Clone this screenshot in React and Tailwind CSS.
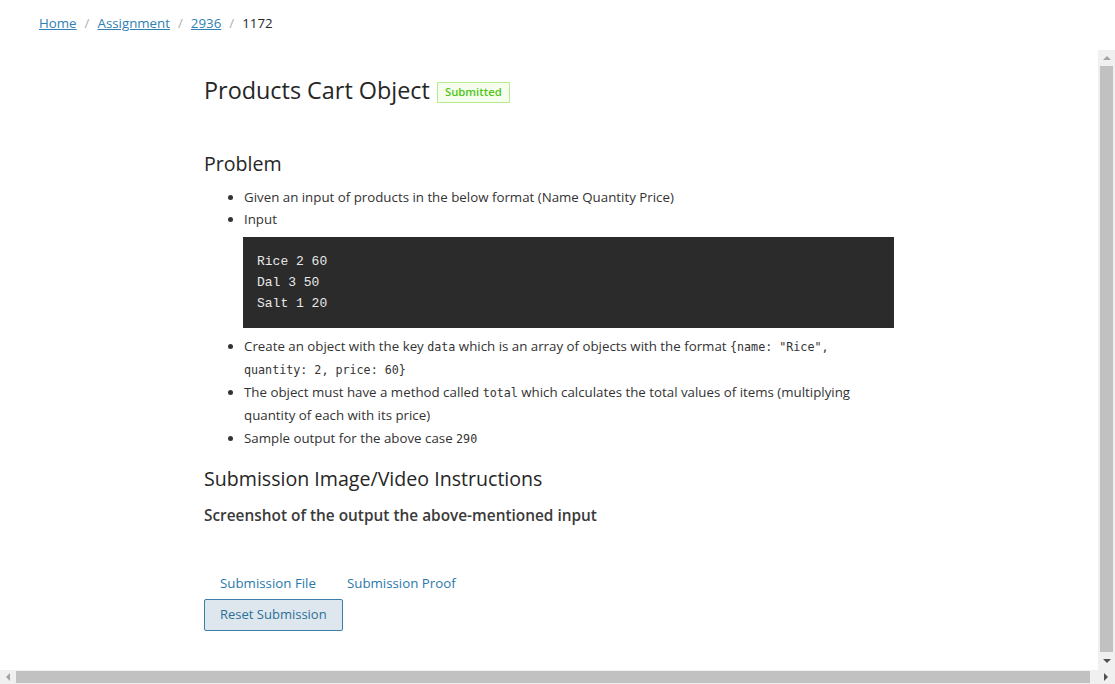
import React from 'react';

const font = { fontFamily: '"Open Sans", "Noto Sans", sans-serif' };

const Code = ({ children }) => (
  <code className="font-['DejaVu_Sans_Mono',monospace] text-[11.7px] leading-none text-[#333]">{children}</code>
);

const VScrollbar = () => (
  <div className="w-[17px] bg-[#f0f0f0] flex flex-col items-center">
    <div className="h-[16px] w-full flex items-center justify-center">
      <div className="w-0 h-0 border-l-[4px] border-r-[4px] border-b-[4px] border-l-transparent border-r-transparent border-b-[#a3a3a3]" />
    </div>
    <div className="flex-1 w-[13px] bg-[#c1c1c1]" />
    <div className="h-[18px] w-full flex items-center justify-center">
      <div className="w-0 h-0 border-l-[4px] border-r-[4px] border-t-[4px] border-l-transparent border-r-transparent border-t-[#505050]" />
    </div>
  </div>
);

const HScrollbar = () => (
  <div className="h-[14px] bg-[#f0f0f0] flex items-center">
    <div className="w-[16px] flex justify-center">
      <div className="w-0 h-0 border-t-[4px] border-b-[4px] border-r-[4px] border-t-transparent border-b-transparent border-r-[#a3a3a3]" />
    </div>
    <div className="h-[12px] w-[1074px] bg-[#c1c1c1]" />
    <div className="flex-1 flex justify-end pr-[7px]">
      <div className="w-0 h-0 border-t-[4px] border-b-[4px] border-l-[4px] border-t-transparent border-b-transparent border-l-[#505050]" />
    </div>
  </div>
);

export default function App() {
  return (
    <div className="w-[1115px] h-[684px] flex flex-col bg-white overflow-hidden text-[#333]" style={font}>
      {/* breadcrumb */}
      <div className="h-[50px] pl-[39px] pt-[13px] text-[13.3px] leading-[20px] flex items-start">
        <a href="#" className="underline text-[#2f7fb2]">Home</a>
        <span className="mx-[8px] text-[#b0b0b0]">/</span>
        <a href="#" className="underline text-[#2f7fb2]">Assignment</a>
        <span className="mx-[8px] text-[#b0b0b0]">/</span>
        <a href="#" className="underline text-[#2f7fb2]">2936</a>
        <span className="mx-[8px] text-[#b0b0b0]">/</span>
        <span className="text-[#262626]">1172</span>
      </div>

      <div className="flex-1 flex min-h-0">
        <div className="flex-1 pl-[204px] pt-[24px]">
          <div className="w-[690px]">
            <div className="flex items-center">
              <h1 className="text-[23.4px] leading-[32px] text-[#262626]">Products Cart Object</h1>
              <span className="ml-[7px] mt-[4px] px-[7px] h-[21px] flex items-center border border-[#b7eb8f] bg-[#f6ffed] text-[#52c41a] text-[11.3px] font-semibold">
                Submitted
              </span>
            </div>

            <h2 className="mt-[44px] text-[19.6px] leading-[28px] text-[#262626]">Problem</h2>

            <ul className="mt-[8px] pl-[40px] list-disc text-[13.3px] leading-[22px]">
              <li>Given an input of products in the below format (Name Quantity Price)</li>
              <li>
                Input
                <pre className="mt-[7px] mb-[7px] -ml-[1px] bg-[#2b2b2b] text-[#e8e8e8] px-[14px] py-[14px] font-['Liberation_Mono',monospace] text-[13px] leading-[21px]">
{`Rice 2 60
Dal 3 50
Salt 1 20`}
                </pre>
              </li>
              <li className="leading-[23px]">
                Create an object with the key <Code>data</Code> which is an array of objects with the format{' '}
                <Code>{'{name: "Rice", quantity: 2, price: 60}'}</Code>
              </li>
              <li className="leading-[23px]">
                The object must have a method called <Code>total</Code> which calculates the total values of items (multiplying quantity of each with its price)
              </li>
              <li className="leading-[23px]">
                Sample output for the above case <Code>290</Code>
              </li>
            </ul>

            <h2 className="mt-[15px] text-[19.6px] leading-[28px] text-[#262626]">Submission Image/Video Instructions</h2>
            <p className="mt-[11px] text-[15.4px] leading-[24px] font-semibold text-[#3a3a3a]">
              Screenshot of the output the above-mentioned input
            </p>

            <div className="mt-[44px] flex text-[13.3px] leading-[22px] text-[#2a78ab]">
              <span className="pl-[16px] pr-[31px]">Submission File</span>
              <span>Submission Proof</span>
            </div>
            <button className="mt-[5px] h-[32px] px-[15px] border border-[#3b7ea8] bg-[#dfe7ee] text-[#2d6f98] text-[13px] rounded-[2px]">
              Reset Submission
            </button>
          </div>
        </div>
        <VScrollbar />
      </div>
      <HScrollbar />
    </div>
  );
}
